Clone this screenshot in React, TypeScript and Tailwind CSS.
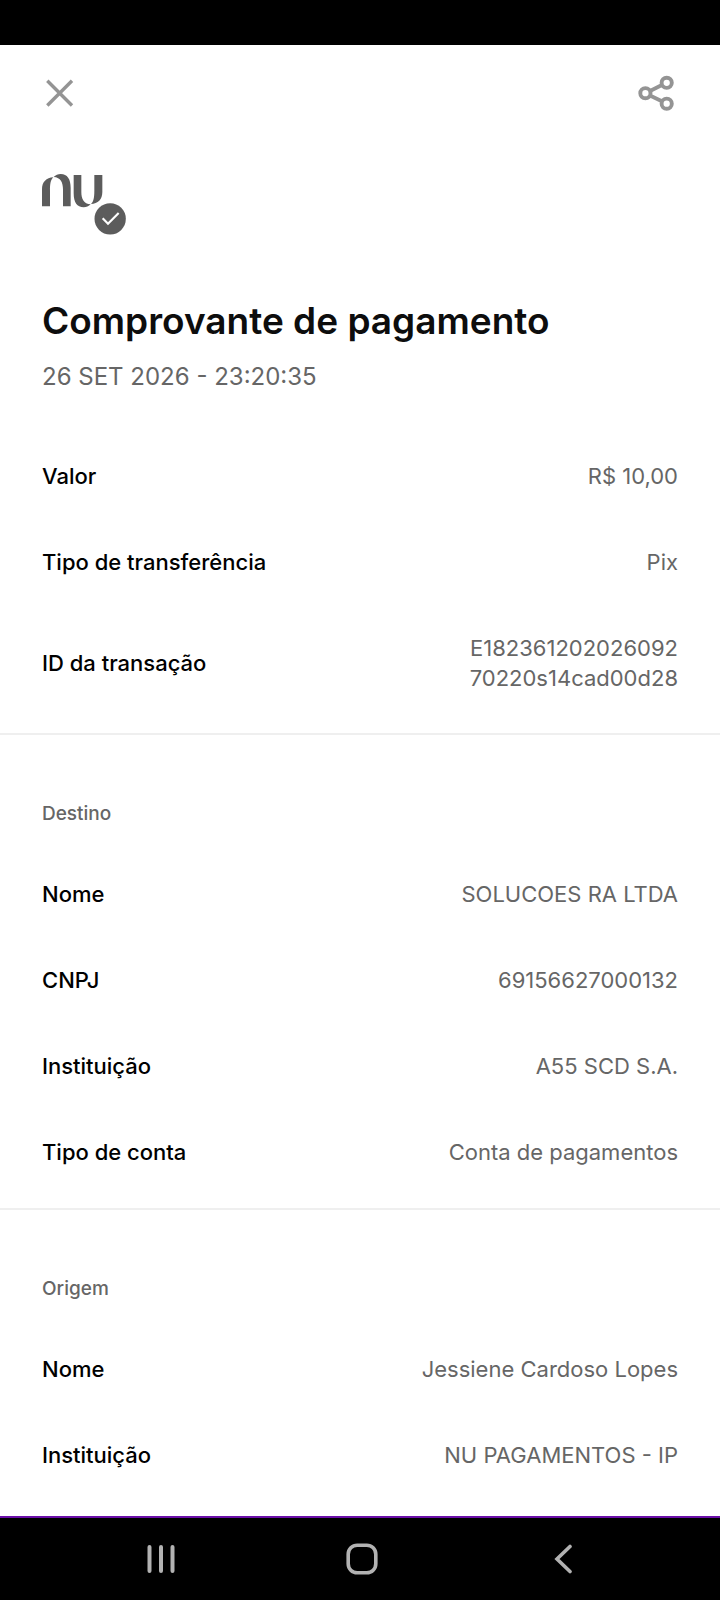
type Item = { label: string; value: string };

const transfer: Item[] = [
  { label: "Valor", value: "R$ 10,00" },
  { label: "Tipo de transferência", value: "Pix" },
  { label: "ID da transação", value: "E182361202026092\n70220s14cad00d28" },
];

const destination: Item[] = [
  { label: "Nome", value: "SOLUCOES RA LTDA" },
  { label: "CNPJ", value: "69156627000132" },
  { label: "Instituição", value: "A55 SCD S.A." },
  { label: "Tipo de conta", value: "Conta de pagamentos" },
];

const origin: Item[] = [
  { label: "Nome", value: "Jessiene Cardoso Lopes" },
  { label: "Instituição", value: "NU PAGAMENTOS - IP" },
];

const CloseIcon = () => (
  <svg width="28" height="28" viewBox="0 0 28 28" fill="none" stroke="#949494" strokeWidth="3.4">
    <path d="M1.3 1.8 26 26.5M26 1.8 1.3 26.5" />
  </svg>
);

const ShareIcon = () => (
  <svg width="36" height="36" viewBox="0 0 36 36" fill="none" stroke="#949494" strokeWidth="3.9">
    <circle cx="7.4" cy="18.2" r="5.1" />
    <circle cx="28.7" cy="7.8" r="5.1" />
    <circle cx="28.7" cy="28.7" r="5.1" />
    <path d="M12 15.9 23.9 10M12 20.6 23.9 26.3" />
  </svg>
);

const NuLogo = () => (
  <svg width="85" height="61" viewBox="126 432 255 183" role="img" aria-label="Nu">
    <g id="arch" fill="#5c5c5c">
      <path d="M126 529V478C126 456 139 443 160 442C152 449 150 462 150 482V529Z" />
      <path d="M161 441C167 435 174 432 182 432C202 432 212 447 212 474V529H189V478C189 458 182 442 161 441Z" />
    </g>
    <use href="#arch" transform="rotate(180 216.5 482)" />
    <circle cx="330.5" cy="566.5" r="47" fill="#5c5c5c" />
    <path d="M308 565 324 581 356 549" fill="none" stroke="#fff" strokeWidth="6.5" />
  </svg>
);

const Rows = ({ items }: { items: Item[] }) => (
  <dl>
    {items.map((item) => (
      <div key={item.label} className="flex items-center justify-between gap-6 py-7 text-[22px] leading-[30px]">
        <dt className="font-medium text-black">{item.label}</dt>
        <dd className="whitespace-pre-line text-right text-[#666]">{item.value}</dd>
      </div>
    ))}
  </dl>
);

const Section = ({ title, items }: { title: string; items: Item[] }) => (
  <section className="border-t-2 border-[#efefef] px-[42px] pt-[65px] pb-[13px]">
    <h2 className="mb-[23px] text-[19px] leading-7 font-medium text-[#666]">{title}</h2>
    <Rows items={items} />
  </section>
);

export default function App() {
  return (
    <div className="flex min-h-screen flex-col bg-white font-['Inter',sans-serif]">
      <div className="h-[45px] bg-black" />

      <header className="flex h-24 items-center justify-between px-[46px]">
        <button type="button" aria-label="Fechar">
          <CloseIcon />
        </button>
        <button type="button" aria-label="Compartilhar">
          <ShareIcon />
        </button>
      </header>

      <main className="flex-1">
        <div className="px-[42px] pt-[33px] pb-3">
          <NuLogo />
          <h1 className="mt-15 text-[37px] leading-[52px] font-semibold text-[#0d0d0d]">
            Comprovante de pagamento
          </h1>
          <p className="mt-3 mb-[38px] text-[24px] leading-9 text-[#666]">26 SET 2026 - 23:20:35</p>
          <Rows items={transfer} />
        </div>
        <Section title="Destino" items={destination} />
        <Section title="Origem" items={origin} />
      </main>

      <nav className="grid h-[84px] grid-cols-3 place-items-center border-t-2 border-[#6a0fa8] bg-black pr-14 pl-15">
        <button type="button" aria-label="Recentes">
          <svg width="30" height="30" viewBox="0 0 30 30" stroke="#b2b2b2" strokeWidth="4" strokeLinecap="round">
            <path d="M3.5 3V27M15 3V27M26.5 3V27" />
          </svg>
        </button>
        <button type="button" aria-label="Início">
          <svg width="32" height="32" viewBox="0 0 32 32" fill="none" stroke="#b2b2b2" strokeWidth="3.6">
            <rect x="2.2" y="2.2" width="27.6" height="27.6" rx="9" />
          </svg>
        </button>
        <button type="button" aria-label="Voltar">
          <svg width="20" height="30" viewBox="0 0 20 30" fill="none" stroke="#b2b2b2" strokeWidth="3.6" strokeLinecap="round">
            <path d="M17 2.5 4 15 17 27.5" />
          </svg>
        </button>
      </nav>
    </div>
  );
}
